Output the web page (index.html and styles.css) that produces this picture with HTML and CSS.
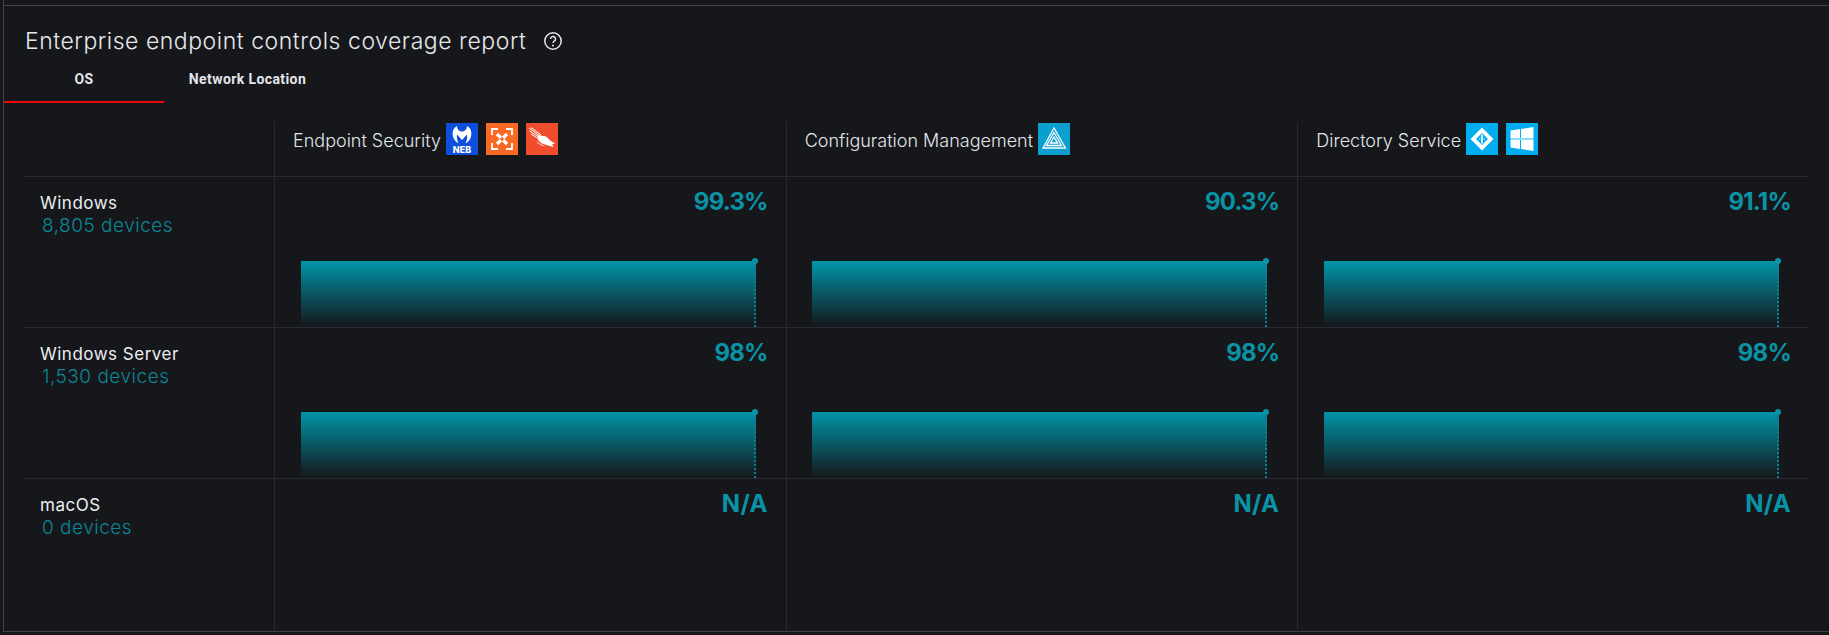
FILE: index.html
```html
<!DOCTYPE html>
<html lang="en">
<head>
  <meta charset="UTF-8" />
  <title>Enterprise endpoint controls coverage report</title>
  <link rel="stylesheet" href="styles.css">
</head>
<body>
  <div class="page">
    <div class="panel">
      <div class="panel-title">
        <h2>Enterprise endpoint controls coverage report</h2>
        <svg class="help-icon" viewBox="0 0 20 20" width="20" height="20">
          <circle cx="10" cy="10" r="8.2" fill="none" stroke="#e4e6ea" stroke-width="1.5"/>
          <path d="M7.5 8a2.5 2.5 0 1 1 3.8 2.1c-.9.6-1.3 1-1.3 2" fill="none" stroke="#e4e6ea" stroke-width="1.5"/>
          <circle cx="10" cy="14.6" r="1" fill="#e4e6ea"/>
        </svg>
      </div>

      <div class="tabs">
        <div class="tab active">OS</div>
        <div class="tab wide">Network Location</div>
      </div>

      <div class="report">
        <div class="row head-row">
          <div class="label"></div>
          <div class="cell head">
            <span class="head-text">Endpoint Security</span>
            <div class="logos">
              <svg class="logo" viewBox="0 0 32 32" style="background:#0d4fdc">
                <path d="M11 3C7 5 5.500 10 7.500 15c1 2.500 3 4.500 5 5.500-1.500-3.500-2-6.500-1.500-9l5 5.500 5-5.500c.5 2.500 0 5.500-1.500 9 2-1 4-3 5-5.500 2-5 .5-10-3.500-12 0 3-2 5.500-5 5.500S11 6 11 3z" fill="#fff"/>
                <text x="16" y="30" class="logo-text">NEB</text>
              </svg>
              <svg class="logo" viewBox="0 0 32 32" style="background:#fa6a24">
                <path d="M12 6H6v6M20 6h6v6M6 20v6h6M26 20v6h-6" fill="none" stroke="#fff" stroke-width="1.800"/>
                <path d="M11 11l10 10M21 11L11 21" stroke="#fff" stroke-width="3.200"/>
                <path d="M16 13.800l2.200 2.200-2.200 2.200-2.200-2.200z" fill="#fa6a24"/>
              </svg>
              <svg class="logo" viewBox="0 0 32 32" style="background:#f04d2e">
                <path d="M3 5l11 8M5 4.500l10 7.500M3.500 8l10 6.500M5 11l8 5" stroke="#fff" stroke-width="1" fill="none"/>
                <path d="M12 12l8 1.500 5 4.500 4 2.500-3 1 1.500 2.500-5.500-1.500-6-2-4-3.500z" fill="#fff"/>
                <path d="M10 18c3 2 6 4 10 5.500-4-.5-7.500-2-10-5.500z" fill="#fff" opacity=".85"/>
              </svg>
            </div>
          </div>
          <div class="cell head">
            <span class="head-text">Configuration Management</span>
            <div class="logos">
              <svg class="logo" viewBox="0 0 32 32" style="background:#0a9fcf">
                <path d="M16 5l11.500 20H5z" fill="none" stroke="#fff" stroke-width="1.300"/>
                <path d="M16 9.500l7.500 13H8.500z" fill="none" stroke="#fff" stroke-width="1.300"/>
                <path d="M16 14l3.500 6h-7z" fill="none" stroke="#fff" stroke-width="1.300"/>
              </svg>
            </div>
          </div>
          <div class="cell head">
            <span class="head-text">Directory Service</span>
            <div class="logos">
              <svg class="logo" viewBox="0 0 32 32" style="background:#00adef">
                <path d="M16 4.500L27.500 16 16 27.500 4.500 16z" fill="#fff"/>
                <path d="M16 10l6 6-6 6-6-6z" fill="#00adef"/>
                <path d="M15.200 11.500h1.600v9h-1.600z" fill="#fff"/>
                <path d="M13.500 14.500v3l1 -1.500zM18.500 14.500v3l-1-1.500z" fill="#fff"/>
              </svg>
              <svg class="logo" viewBox="0 0 32 32" style="background:#00adef">
                <path d="M4.500 7.500l9.500-1.400V15H4.500zM15 5.900L27.500 4v11H15z" fill="#fff"/>
                <path d="M4.500 17H14v8.900l-9.500-1.400zM15 17h12.500v11L15 26.100z" fill="#fff"/>
                <path d="M4.500 15h23v2h-23z" fill="#8fdcf7"/>
              </svg>
            </div>
          </div>
        </div>

        <div class="row">
          <div class="label">
            <div class="os-name">Windows</div>
            <div class="os-count">8,805 devices</div>
          </div>
          <div class="cell"><div class="pct">99.3%</div><div class="bar"></div></div>
          <div class="cell"><div class="pct">90.3%</div><div class="bar"></div></div>
          <div class="cell"><div class="pct">91.1%</div><div class="bar"></div></div>
        </div>

        <div class="row">
          <div class="label">
            <div class="os-name">Windows Server</div>
            <div class="os-count">1,530 devices</div>
          </div>
          <div class="cell"><div class="pct">98%</div><div class="bar"></div></div>
          <div class="cell"><div class="pct">98%</div><div class="bar"></div></div>
          <div class="cell"><div class="pct">98%</div><div class="bar"></div></div>
        </div>

        <div class="row last-row">
          <div class="label">
            <div class="os-name">macOS</div>
            <div class="os-count">0 devices</div>
          </div>
          <div class="cell"><div class="pct na">N/A</div></div>
          <div class="cell"><div class="pct na">N/A</div></div>
          <div class="cell"><div class="pct na">N/A</div></div>
        </div>
      </div>
    </div>
  </div>
</body>
</html>
```

FILE: styles.css
```css
body {
  background: #15171b;
  color: #e4e6ea;
  font-family: 'Inter', sans-serif;
  margin: 0;
  padding-left: 3px;
  overflow: hidden;
}

.page {
  height: 632px;
  box-sizing: border-box;
  padding-top: 5px;
  border-left: 1px solid #43454d;
  border-bottom: 1px solid #43454d;
}

.panel {
  border-top: 1px solid #43454d;
}

.panel-title {
  display: flex;
  align-items: center;
  gap: 17px;
  height: 37px;
  padding: 16px 0 0 21px;
}

.panel-title h2 {
  margin: 0;
  font-size: 23px;
  font-weight: 300;
  letter-spacing: 0.53px;
  color: #e6e8ec;
}

.help-icon {
  display: block;
}

.tabs {
  display: flex;
  height: 44px;
}

.tab {
  width: 160px;
  box-sizing: border-box;
  text-align: center;
  font-family: 'Roboto', sans-serif;
  font-size: 14px;
  font-weight: 700;
  letter-spacing: 0.4px;
  line-height: 41px;
}

.tab.wide {
  width: 167px;
}

.tab.active {
  border-bottom: 2px solid #ea0a0a;
}

.report {
  width: 1785px;
  margin: 19px 0 0 20px;
}

.row {
  display: grid;
  grid-template-columns: 250px repeat(3, 1fr);
  height: 151px;
  border-bottom: 1px solid #2a2b31;
  box-sizing: border-box;
}

.head-row {
  height: 55px;
}

.last-row {
  border-bottom: none;
}

.label {
  padding: 15px 0 0 16px;
}

.os-name {
  font-size: 17px;
  line-height: 22px;
  letter-spacing: 0.5px;
  color: #eceef1;
}

.os-count {
  padding-left: 2px;
  font-size: 19px;
  line-height: 23px;
  font-weight: 300;
  letter-spacing: 0.5px;
  color: #0b8797;
}

.cell {
  display: flex;
  flex-direction: column;
  border-left: 1px solid #2a2b31;
  padding: 0 18px 0 25.5px;
}

.head {
  flex-direction: row;
  padding: 1px 0 0 18px;
  gap: 5px;
  font-size: 18px;
  font-weight: 300;
}

.head-text {
  line-height: 36px;
}

.logos {
  display: flex;
  gap: 8px;
}

.logo {
  width: 32px;
  height: 32px;
  display: block;
}

.logo-text {
  font-family: 'Inter', sans-serif;
  font-size: 9px;
  font-weight: 800;
  fill: #fff;
  text-anchor: middle;
}

.pct {
  padding-top: 10px;
  text-align: right;
  font-size: 24px;
  line-height: 30px;
  font-weight: 700;
  letter-spacing: -0.8px;
  color: #0a93a6;
}

.pct.na {
  letter-spacing: 0.3px;
}

.bar {
  position: relative;
  margin: auto 12px 0 0;
  height: 66px;
  background: linear-gradient(to bottom, #0095a8, rgba(0, 149, 168, 0));
  border-right: 2px dotted #0a7f8f;
}

.bar::after {
  content: "";
  position: absolute;
  top: -3px;
  right: -4px;
  width: 6px;
  height: 6px;
  border-radius: 50%;
  background: #0a93a6;
}
```
